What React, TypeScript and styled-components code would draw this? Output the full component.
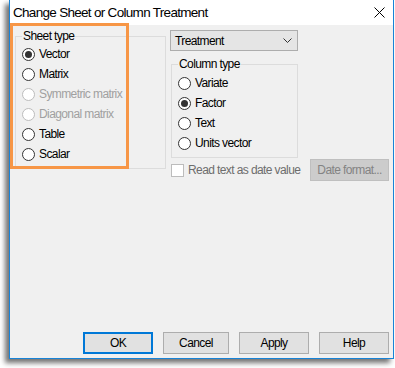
import styled, { createGlobalStyle } from 'styled-components';

const GlobalStyle = createGlobalStyle`
  body {
    margin: 0;
    background: #ffffff;
    font-family: "Liberation Sans", Arial, sans-serif;
    color: #000;
  }
`;

const sheetTypes = [
  { label: 'Vector', checked: true },
  { label: 'Matrix' },
  { label: 'Symmetric matrix', disabled: true },
  { label: 'Diagonal matrix', disabled: true },
  { label: 'Table' },
  { label: 'Scalar' },
];

const columnTypes = [
  { label: 'Variate' },
  { label: 'Factor', checked: true },
  { label: 'Text' },
  { label: 'Units vector' },
];

interface RadioProps {
  label: string
  checked?: boolean
  disabled?: boolean
}

const Radio = ({ label, checked, disabled }: RadioProps) => (
  <RadioRow $disabled={disabled}>
    <RadioCircle $disabled={disabled}>{checked && <RadioDot />}</RadioCircle>
    <span>{label}</span>
  </RadioRow>
);

const App = () => {
  return (
    <>
      <GlobalStyle />
      <Page>
        <Window>
          <TitleBar>
            <Title>Change Sheet or Column Treatment</Title>
            <svg width="11" height="11" viewBox="0 0 11 11">
              <path d="M0.5 0.5 L10.5 10.5 M10.5 0.5 L0.5 10.5" stroke="#000" strokeWidth="1" fill="none" />
            </svg>
          </TitleBar>
          <Body>
            <TopArea>
              <SheetGroup>
                <Legend>Sheet type</Legend>
                {sheetTypes.map((r) => <Radio key={r.label} {...r} />)}
              </SheetGroup>
              <RightColumn>
                <Combo>
                  <span>Treatment</span>
                  <svg width="9" height="5" viewBox="0 0 9 5">
                    <path d="M0.5 0.5 L4.5 4.5 L8.5 0.5" stroke="#333" strokeWidth="1" fill="none" />
                  </svg>
                </Combo>
                <ColumnGroup>
                  <Legend>Column type</Legend>
                  {columnTypes.map((r) => <Radio key={r.label} {...r} />)}
                </ColumnGroup>
                <CheckRow>
                  <CheckLabel>
                    <CheckBox />
                    <span>Read text as date value</span>
                  </CheckLabel>
                  <Button $w={79} $disabled>Date format...</Button>
                </CheckRow>
              </RightColumn>
            </TopArea>
            <ButtonRow>
              <Button $w={70} $default>OK</Button>
              <Button $w={66}>Cancel</Button>
              <Button $w={70}>Apply</Button>
              <Button $w={70}>Help</Button>
            </ButtonRow>
          </Body>
          <Highlight />
        </Window>
      </Page>
    </>
  );
};

const Page = styled.div`
  padding-left: 9px;
  height: 368px;
  overflow: hidden;
`;

const Window = styled.div`
  position: relative;
  box-sizing: border-box;
  width: 385px;
  height: 359px;
  display: flex;
  flex-direction: column;
  background: #f0f0f0;
  border: 1px solid #1883d7;
  border-top: none;
  box-shadow: -4px 4px 5px rgba(0, 0, 0, 0.55);
`;

const TitleBar = styled.div`
  height: 25px;
  flex-shrink: 0;
  display: flex;
  align-items: center;
  justify-content: space-between;
  padding: 0 8px 0 3px;
  background: #ffffff;
`;

const Title = styled.div`
  font-size: 13.5px;
  letter-spacing: -0.7px;
  color: #000;
`;

const Body = styled.div`
  flex: 1;
  display: flex;
  flex-direction: column;
  padding: 4px 4px 4px 5px;
  font-size: 12px;
  letter-spacing: -0.6px;
`;

const TopArea = styled.div`
  display: flex;
  gap: 4px;
  align-items: flex-start;
`;

const Group = styled.fieldset`
  margin: 0;
  box-sizing: border-box;
  border: 1px solid #dcdcdc;
  padding: 0 0 0 6px;
`;

const SheetGroup = styled(Group)`
  width: 151px;
  height: 140px;
  padding-top: 1px;
`;

const ColumnGroup = styled(Group)`
  width: 127px;
  height: 101px;
  margin: 6px 0 0 1px;
  padding-top: 2px;
`;

const Legend = styled.legend`
  padding: 0 1px;
  height: 14px;
  line-height: 14px;
`;

const RadioRow = styled.div<{ $disabled?: boolean }>`
  display: flex;
  align-items: center;
  gap: 4px;
  height: 20px;
  color: ${({ $disabled }) => ($disabled ? '#a0a0a0' : '#000')};
`;

const RadioCircle = styled.span<{ $disabled?: boolean }>`
  box-sizing: border-box;
  width: 13px;
  height: 13px;
  border-radius: 50%;
  border: 1px solid ${({ $disabled }) => ($disabled ? '#bcbcbc' : '#333333')};
  background: #ffffff;
  display: flex;
  align-items: center;
  justify-content: center;
`;

const RadioDot = styled.span`
  width: 7px;
  height: 7px;
  border-radius: 50%;
  background: #333333;
`;

const RightColumn = styled.div`
  display: flex;
  flex-direction: column;
  width: 219px;
`;

const Combo = styled.div`
  box-sizing: border-box;
  width: 128px;
  height: 21px;
  margin-top: 1px;
  display: flex;
  align-items: center;
  justify-content: space-between;
  padding: 0 5px 0 4px;
  background: #e5e5e5;
  border: 1px solid #adadad;
`;

const CheckRow = styled.div`
  display: flex;
  align-items: center;
  justify-content: space-between;
  margin-top: 1px;
`;

const CheckLabel = styled.div`
  display: flex;
  align-items: center;
  gap: 4px;
  margin-left: 1px;
  color: #6d6d6d;
`;

const CheckBox = styled.span`
  box-sizing: border-box;
  width: 13px;
  height: 13px;
  border: 1px solid #bcbcbc;
  background: #ffffff;
`;

const Button = styled.div<{ $w: number; $default?: boolean; $disabled?: boolean }>`
  box-sizing: border-box;
  width: ${({ $w }) => $w}px;
  height: 22px;
  display: flex;
  align-items: center;
  justify-content: center;
  background: ${({ $disabled }) => ($disabled ? '#cccccc' : '#e1e1e1')};
  color: ${({ $disabled }) => ($disabled ? '#838383' : '#000')};
  border: ${({ $default, $disabled }) =>
    $default ? '2px solid #0078d7' : $disabled ? '1px solid #bfbfbf' : '1px solid #adadad'};
`;

const ButtonRow = styled.div`
  margin-top: auto;
  display: flex;
  justify-content: flex-end;
  gap: 10px;
`;

const Highlight = styled.div`
  position: absolute;
  left: 0;
  top: 23px;
  width: 119px;
  height: 146px;
  box-sizing: border-box;
  border: 3px solid #f79646;
  pointer-events: none;
`;

export default App
